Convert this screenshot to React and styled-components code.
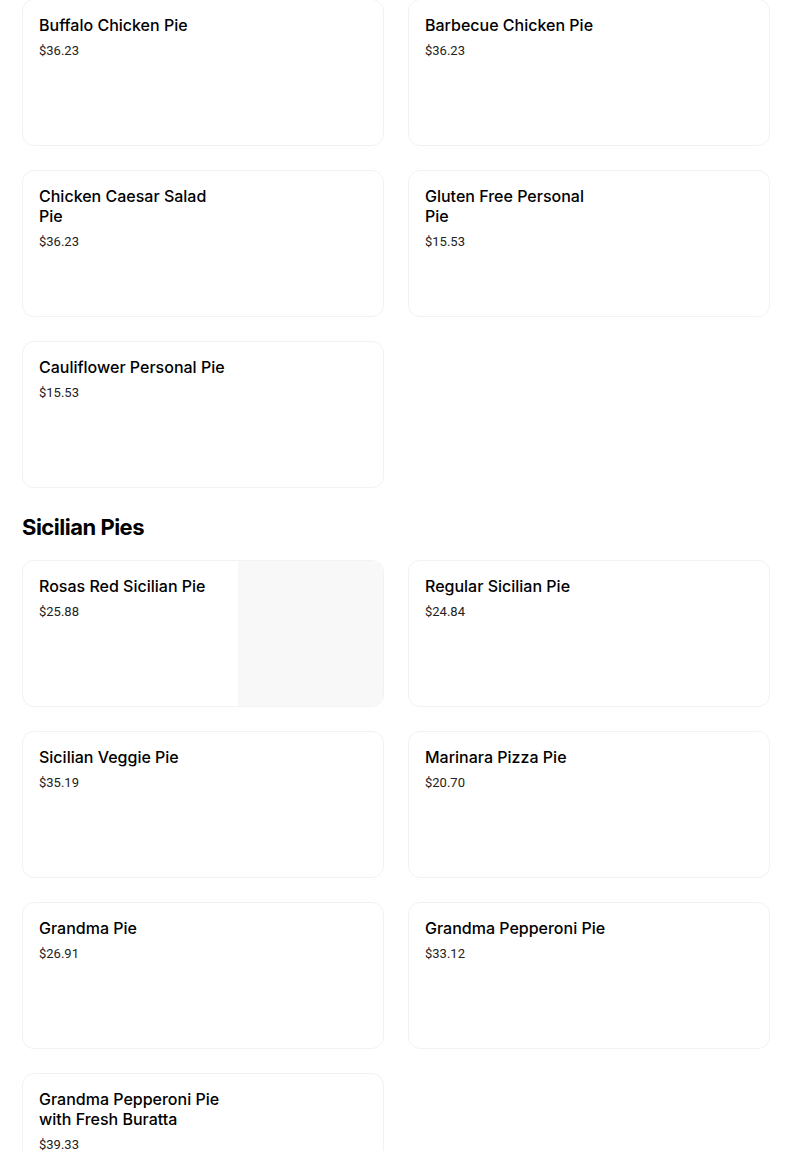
import React from "react";
import styled, { createGlobalStyle } from "styled-components";

const GlobalStyle = createGlobalStyle`
  html, body {
    margin: 0;
    padding: 0;
    background: #ffffff;
    font-family: Inter, "Noto Sans", sans-serif;
    color: #000000;
  }
`;

const sections = [
  {
    title: null,
    items: [
      { name: "Buffalo Chicken Pie", price: "$36.23" },
      { name: "Barbecue Chicken Pie", price: "$36.23" },
      { name: "Chicken Caesar Salad Pie", price: "$36.23" },
      { name: "Gluten Free Personal Pie", price: "$15.53" },
      { name: "Cauliflower Personal Pie", price: "$15.53" },
    ],
  },
  {
    title: "Sicilian Pies",
    items: [
      { name: "Rosas Red Sicilian Pie", price: "$25.88", image: true },
      { name: "Regular Sicilian Pie", price: "$24.84" },
      { name: "Sicilian Veggie Pie", price: "$35.19" },
      { name: "Marinara Pizza Pie", price: "$20.70" },
      { name: "Grandma Pie", price: "$26.91" },
      { name: "Grandma Pepperoni Pie", price: "$33.12" },
      { name: "Grandma Pepperoni Pie with Fresh Buratta", price: "$39.33" },
    ],
  },
];

const App = () => {
  return (
    <Page>
      <GlobalStyle />
      {sections.map((section, i) => (
        <Section key={i}>
          {section.title && <SectionTitle>{section.title}</SectionTitle>}
          <Grid>
            {section.items.map((item) => (
              <Card key={item.name}>
                <Info>
                  <ItemName>{item.name}</ItemName>
                  <Price>{item.price}</Price>
                </Info>
                <Thumb $filled={item.image} />
              </Card>
            ))}
          </Grid>
        </Section>
      ))}
    </Page>
  );
};

export default App;

const Page = styled.div`
  width: 748px;
  margin: -1px 0 0 22px;
`;

const Section = styled.section`
  & + & {
    margin-top: 23px;
  }
`;

const SectionTitle = styled.h2`
  margin: 0 0 17px;
  font-size: 22px;
  line-height: 32px;
  font-weight: 700;
  letter-spacing: -0.5px;
`;

const Grid = styled.div`
  display: grid;
  grid-template-columns: 1fr 1fr;
  column-gap: 24px;
  row-gap: 24px;
`;

const Card = styled.div`
  box-sizing: border-box;
  height: 147px;
  display: flex;
  border: 1px solid #f2f2f2;
  border-radius: 12px;
  overflow: hidden;
  background: #ffffff;
`;

const Info = styled.div`
  flex: 1;
  min-width: 0;
  padding: 15px 13px 16px 16px;
`;

const ItemName = styled.div`
  font-size: 16px;
  line-height: 20px;
  font-weight: 500;
  color: #000000;
`;

const Price = styled.div`
  margin-top: 7px;
  font-family: Roboto, "Noto Sans", sans-serif;
  font-size: 13px;
  line-height: 18px;
  color: #222222;
`;

const Thumb = styled.div`
  flex: 0 0 145px;
  background: ${(p) => (p.$filled ? "#f8f8f8" : "transparent")};
`;
